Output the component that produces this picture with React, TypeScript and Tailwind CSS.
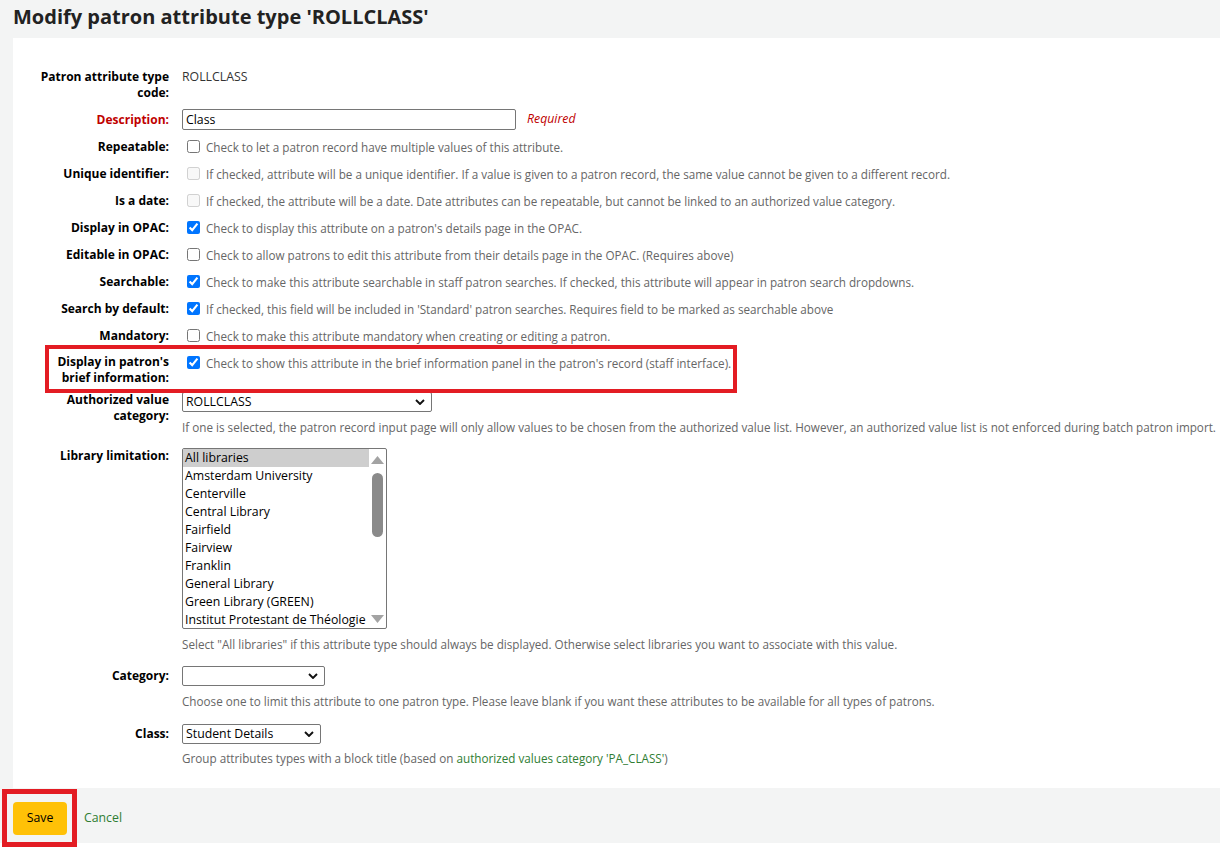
import type { ReactNode } from 'react'

// Formulari de Koha: "Modify patron attribute type"
const LIBRARIES = [
  'All libraries',
  'Amsterdam University',
  'Centerville',
  'Central Library',
  'Fairfield',
  'Fairview',
  'Franklin',
  'General Library',
  'Green Library (GREEN)',
  'Institut Protestant de Théologie',
]

function Label({ children, red, className = '' }: { children: ReactNode; red?: boolean; className?: string }) {
  return (
    <label
      className={
        (red
          ? 'mr-[13px] w-[135px] shrink-0 text-right text-[12px] font-bold leading-4 text-[#c00000] '
          : 'mr-[13px] w-[135px] shrink-0 text-right text-[12px] font-bold leading-4 text-black ') + className
      }
    >
      {children}
    </label>
  )
}

function Hint({ children }: { children: ReactNode }) {
  return <div className="whitespace-nowrap text-[11.7px] leading-4 text-[#666]">{children}</div>
}

function CheckRow({
  label,
  text,
  checked,
  disabled,
}: {
  label: string
  text: string
  checked?: boolean
  disabled?: boolean
}) {
  return (
    <li className="flex py-[5px]">
      <Label className="leading-[17px]">{label}</Label>
      <div className="flex h-[17px] items-center">
        <input
          type="checkbox"
          readOnly
          checked={!!checked}
          disabled={disabled}
          className="m-0 ml-[5px] mr-[6px] h-[13px] w-[13px]"
        />
        <Hint>{text}</Hint>
      </div>
    </li>
  )
}

function Chevron() {
  return (
    <svg width="10" height="6" viewBox="0 0 10 6">
      <path d="M1 1l4 4 4-4" stroke="#111" strokeWidth="1.9" fill="none" />
    </svg>
  )
}

function Select({ className, value }: { className: string; value?: string }) {
  return (
    <div
      className={`flex h-[20px] items-center justify-between rounded-[2px] border border-[#767676] bg-white pl-[3px] pr-[6px] text-[12.3px] text-black ${className}`}
    >
      <span>{value}</span>
      <Chevron />
    </div>
  )
}

export default function App() {
  return (
    <div className="min-h-screen bg-white font-['Open_Sans',sans-serif]">
      <div className="bg-[#f3f4f4] pl-[13px]">
        <h1 className="flex h-[38px] items-center pb-[5px] text-[20px] font-bold text-[#222]">
          Modify patron attribute type 'ROLLCLASS'
        </h1>

        <div className="bg-white pb-[17px] pt-[26px]">
          <ol className="pl-[21px]">
            <li className="flex pb-[3px] pt-[5px]">
              <Label>Patron attribute type code:</Label>
              <span className="text-[12.3px] leading-4 text-[#333]">ROLLCLASS</span>
            </li>

            <li className="flex items-center pb-[3px] pt-[5px]">
              <Label red>Description:</Label>
              <input
                readOnly
                value="Class"
                className="h-[21px] w-[334px] rounded-[2px] border border-[#767676] px-[3px] text-[12.3px] text-black"
              />
              <span className="ml-[11px] text-[12.3px] italic text-[#c00000]">Required</span>
            </li>

            <CheckRow label="Repeatable:" text="Check to let a patron record have multiple values of this attribute." />
            <CheckRow
              label="Unique identifier:"
              disabled
              text="If checked, attribute will be a unique identifier. If a value is given to a patron record, the same value cannot be given to a different record."
            />
            <CheckRow
              label="Is a date:"
              disabled
              text="If checked, the attribute will be a date. Date attributes can be repeatable, but cannot be linked to an authorized value category."
            />
            <CheckRow
              label="Display in OPAC:"
              checked
              text="Check to display this attribute on a patron's details page in the OPAC."
            />
            <CheckRow
              label="Editable in OPAC:"
              text="Check to allow patrons to edit this attribute from their details page in the OPAC. (Requires above)"
            />
            <CheckRow
              label="Searchable:"
              checked
              text="Check to make this attribute searchable in staff patron searches. If checked, this attribute will appear in patron search dropdowns."
            />
            <CheckRow
              label="Search by default:"
              checked
              text="If checked, this field will be included in 'Standard' patron searches. Requires field to be marked as searchable above"
            />
            <CheckRow
              label="Mandatory:"
              text="Check to make this attribute mandatory when creating or editing a patron."
            />

            {/* fila destacada amb el requadre vermell */}
            <li className="relative flex pb-[1px] pt-[5px]">
              <Label>Display in patron's brief information:</Label>
              <div className="flex h-[17px] items-center">
                <input
                  type="checkbox"
                  readOnly
                  checked
                  className="m-0 ml-[5px] mr-[6px] h-[13px] w-[13px]"
                />
                <Hint>
                  Check to show this attribute in the brief information panel in the patron's record (staff
                  interface).
                </Hint>
              </div>
              <div className="absolute left-[11px] top-[-4px] h-[48px] w-[692px] border-4 border-[#e31c23]" />
            </li>

            <li className="flex pb-[5px] pt-[5px]">
              <Label>Authorized value category:</Label>
              <div className="flex flex-col">
                <Select className="w-[250px]" value="ROLLCLASS" />
                <div className="mt-[7px]">
                  <Hint>
                    If one is selected, the patron record input page will only allow values to be chosen from the
                    authorized value list. However, an authorized value list is not enforced during batch patron
                    import.
                  </Hint>
                </div>
              </div>
            </li>

            <li className="flex pb-[5px] pt-[8px]">
              <Label>Library limitation:</Label>
              <div className="flex flex-col">
                <div className="flex h-[181px] w-[205px] rounded-[2px] border border-[#767676] bg-white">
                  <div className="flex-1 overflow-hidden">
                    {LIBRARIES.map((l, i) => (
                      <div
                        key={l}
                        className={
                          i === 0
                            ? 'whitespace-nowrap bg-[#cecece] pl-[2px] text-[12.3px] leading-[18px] text-black'
                            : 'whitespace-nowrap pl-[2px] text-[12.3px] leading-[18px] text-black'
                        }
                      >
                        {l}
                      </div>
                    ))}
                  </div>
                  <div className="flex w-[17px] flex-col items-center pb-[5px] pt-[7px]">
                    <svg width="13" height="8" viewBox="0 0 13 8">
                      <polygon points="6.5,0 13,8 0,8" fill="#a3a3a3" />
                    </svg>
                    <div className="mt-[9px] h-[64px] w-[11px] rounded-full bg-[#8a8a8a]" />
                    <svg className="mt-auto" width="13" height="8" viewBox="0 0 13 8">
                      <polygon points="0,0 13,0 6.5,8" fill="#a3a3a3" />
                    </svg>
                  </div>
                </div>
                <div className="mt-[7px]">
                  <Hint>
                    Select "All libraries" if this attribute type should always be displayed. Otherwise select
                    libraries you want to associate with this value.
                  </Hint>
                </div>
              </div>
            </li>

            <li className="flex pb-[5px] pt-[9px]">
              <Label className="pt-[2px]">Category:</Label>
              <div className="flex flex-col">
                <Select className="w-[143px]" />
                <div className="mt-[7px]">
                  <Hint>
                    Choose one to limit this attribute to one patron type. Please leave blank if you want these
                    attributes to be available for all types of patrons.
                  </Hint>
                </div>
              </div>
            </li>

            <li className="flex pb-[5px] pt-[10px]">
              <Label className="pt-[2px]">Class:</Label>
              <div className="flex flex-col">
                <Select className="w-[139px]" value="Student Details" />
                <div className="mt-[6px]">
                  <Hint>
                    Group attributes types with a block title (based on{' '}
                    <a className="text-[#2f7d32]">authorized values category 'PA_CLASS'</a>)
                  </Hint>
                </div>
              </div>
            </li>
          </ol>
        </div>

        <div className="relative flex h-[55px] items-start gap-[17px] pt-[14px]">
          <button className="h-[33px] w-[54px] rounded-[4px] bg-[#ffc107] text-[12.3px] text-black">Save</button>
          <a className="mt-[7px] text-[12.3px] text-[#2f7d32]">Cancel</a>
          <div className="absolute left-[-11px] top-[1px] h-[58px] w-[75px] border-[5px] border-[#e31c23]" />
        </div>
      </div>
    </div>
  )
}
